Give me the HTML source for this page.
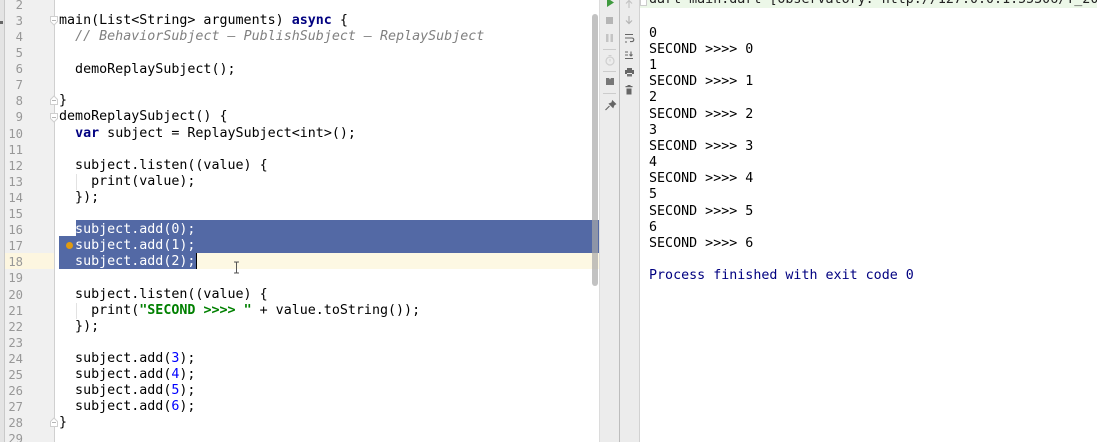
<!DOCTYPE html>
<html><head><meta charset="utf-8">
<style>
html,body{margin:0;padding:0;background:#fff;}
#r{position:relative;width:1097px;height:442px;overflow:hidden;background:#fff;font-family:"DejaVu Sans Mono","Liberation Mono",monospace;font-size:13.33px;color:#000;filter:blur(0.35px);}
.a{position:absolute;}
.l{position:absolute;white-space:pre;line-height:16px;height:16px;}
.n{position:absolute;left:-9px;width:32px;text-align:right;color:#989898;line-height:16px;height:16px;font-size:12.2px;}
b.k{color:#000080;font-weight:bold;}
i{color:#808080;font-style:italic;}
.s{color:#008000;font-weight:bold;}
.d{color:#0000ff;}
.w{color:#fff;}
</style></head><body>
<div id="r">
<div class="a" style="left:0;top:0;width:5px;height:442px;background:#e4e4e4;border-right:1px solid #c9c9c9;box-sizing:border-box;"></div>
<div class="a" style="left:5px;top:0;width:50px;height:442px;background:#f0f0f0;border-right:1px solid #d0d0d0;box-sizing:border-box;"></div>
<div class="a" style="left:0;top:21px;width:3px;height:3px;background:#666;"></div>
<div class="a" style="left:5px;top:253px;width:49px;height:16px;background:#fdf6e0;"></div>
<div class="a" style="left:76px;top:220px;width:524px;height:17px;background:#5369a5;"></div>
<div class="a" style="left:59px;top:236px;width:541px;height:33px;background:#5369a5;"></div>
<div class="a" style="left:196px;top:253px;width:1px;height:16px;background:#000;"></div>
<div class="a" style="left:197px;top:253px;width:402px;height:16px;background:#fdf8e3;"></div>
<div class="a" style="left:66px;top:242px;width:7px;height:7px;border-radius:50%;background:#e09a10;"></div>

<div class="n" style="top:-3px">2</div><div class="n" style="top:13px">3</div><div class="n" style="top:29px">4</div><div class="n" style="top:45px">5</div><div class="n" style="top:61px">6</div><div class="n" style="top:77px">7</div><div class="n" style="top:93px">8</div><div class="n" style="top:109px">9</div><div class="n" style="top:126px">10</div><div class="n" style="top:142px">11</div><div class="n" style="top:158px">12</div><div class="n" style="top:174px">13</div><div class="n" style="top:190px">14</div><div class="n" style="top:206px">15</div><div class="n" style="top:222px">16</div><div class="n" style="top:238px">17</div><div class="n" style="top:254px">18</div><div class="n" style="top:270px">19</div><div class="n" style="top:287px">20</div><div class="n" style="top:303px">21</div><div class="n" style="top:319px">22</div><div class="n" style="top:335px">23</div><div class="n" style="top:351px">24</div><div class="n" style="top:367px">25</div><div class="n" style="top:383px">26</div><div class="n" style="top:399px">27</div><div class="n" style="top:415px">28</div><div class="n" style="top:431px">29</div>

<svg class="a" style="left:0;top:0" width="60" height="442" viewBox="0 0 60 442">
<g fill="#fff" stroke="#cfcfcf" stroke-width="1">
<path d="M50.500 16.500h7v5l-3.500 3.500l-3.500-3.500Z"/>
<path d="M50.500 104.500h7v-5l-3.500-3.500l-3.500 3.500Z"/>
<path d="M50.500 113.500h7v5l-3.500 3.500l-3.500-3.500Z"/>
<path d="M50.500 426.500h7v-5l-3.500-3.500l-3.500 3.500Z"/>
</g>
<path d="M52 20.500h4M52 100.500h4M52 117.500h4M52 422.500h4" stroke="#b5b5b5" fill="none"/>
</svg>

<div class="a" style="left:76px;top:174px;width:1px;height:16px;background:#e2e2e2;"></div>
<div class="a" style="left:76px;top:303px;width:1px;height:16px;background:#e2e2e2;"></div>

<div class="l" style="left:59px;top:13px">main(List&lt;String&gt; arguments) <b class="k">async</b> {</div>
<div class="l" style="left:59px;top:29px">  <i>// BehaviorSubject – PublishSubject – ReplaySubject</i></div>
<div class="l" style="left:59px;top:62px">  demoReplaySubject();</div>
<div class="l" style="left:59px;top:93px">}</div>
<div class="l" style="left:59px;top:109px">demoReplaySubject() {</div>
<div class="l" style="left:59px;top:126px">  <b class="k">var</b> subject = ReplaySubject&lt;int&gt;();</div>
<div class="l" style="left:59px;top:158px">  subject.listen((value) {</div>
<div class="l" style="left:59px;top:174px">    print(value);</div>
<div class="l" style="left:59px;top:190px">  });</div>
<div class="l w" style="left:59px;top:222px">  subject.add(0);</div>
<div class="l w" style="left:59px;top:238px">  subject.add(1);</div>
<div class="l w" style="left:59px;top:254px">  subject.add(2);</div>
<div class="l" style="left:59px;top:287px">  subject.listen((value) {</div>
<div class="l" style="left:59px;top:303px">    print(<span class="s">"SECOND &gt;&gt;&gt;&gt; "</span> + value.toString());</div>
<div class="l" style="left:59px;top:319px">  });</div>
<div class="l" style="left:59px;top:351px">  subject.add(<span class="d">3</span>);</div>
<div class="l" style="left:59px;top:367px">  subject.add(<span class="d">4</span>);</div>
<div class="l" style="left:59px;top:383px">  subject.add(<span class="d">5</span>);</div>
<div class="l" style="left:59px;top:399px">  subject.add(<span class="d">6</span>);</div>
<div class="l" style="left:59px;top:415px">}</div>

<svg class="a" style="left:232px;top:261px" width="9" height="13" viewBox="0 0 9 13"><path d="M2 1h2l.5 1 .5-1h2M4.500 2v9M2 12h2l.5-1 .5 1h2" fill="none" stroke="#555" stroke-width="1"/></svg>

<div class="a" style="left:600px;top:0;width:39px;height:442px;background:#ececec;"></div>
<div class="a" style="left:592px;top:14px;width:6px;height:272px;background:#a8a8a8;opacity:.7;border-radius:3px;"></div>
<div class="a" style="left:599px;top:0;width:1px;height:442px;background:#dcdcdc;"></div>
<div class="a" style="left:619px;top:0;width:1px;height:442px;background:#bdbdbd;"></div>
<div class="a" style="left:639px;top:0;width:1px;height:442px;background:#d2d2d2;"></div>
<div class="a" style="left:603px;top:49px;width:13px;height:1px;background:#ccc;"></div>
<div class="a" style="left:603px;top:71px;width:13px;height:1px;background:#ccc;"></div>
<div class="a" style="left:603px;top:93px;width:13px;height:1px;background:#ccc;"></div>

<svg class="a" style="left:590px;top:0" width="48" height="115" viewBox="0 0 48 115">
<path d="M17 -2V7L24 2.500Z" fill="#3f9a3f"/>
<rect x="16" y="17" width="7" height="7" fill="#b5b5b5"/>
<rect x="16" y="34" width="2.500" height="8" fill="#c4c4c4"/><rect x="20.500" y="34" width="2.500" height="8" fill="#c4c4c4"/>
<circle cx="20" cy="61" r="4" fill="none" stroke="#cfcfcf" stroke-width="1.200"/><path d="M20 59v2.500M18.500 55.500h3" stroke="#cfcfcf" fill="none"/>
<path d="M16 78h3l1 1.500 1-1.500h3v7h-8Z" fill="#777"/>
<path d="M22.500 101l3 3-1.500 .8-1 2.500-3.500-3.500 2.500-1ZM19.500 106l-4 4" fill="#666" stroke="#666" stroke-width="1.200"/>
<path d="M39 8V1M36 3.500l3-3 3 3" stroke="#c4c4c4" stroke-width="1.200" fill="none"/>
<path d="M39 16v7M36 20.500l3 3 3-3" stroke="#b5b5b5" stroke-width="1.200" fill="none"/>
<path d="M35 34.500h8M35 38h7a1.800 1.800 0 0 1 0 3.600h-2M35 42h2" stroke="#666" stroke-width="1.100" fill="none"/>
<path d="M35 52h3M35 55h3M35 58.500h8M41 51.500v4.500M39.500 54.500l1.500 1.500 1.500-1.500" stroke="#666" stroke-width="1.100" fill="none"/>
<path d="M37 68h5v2h2v4h-2v-1h-5v1h-2v-4h2Z" fill="#666"/><rect x="37" y="74" width="5" height="2.500" fill="#777"/>
<path d="M35.500 86h7v1.200h-7ZM37.500 85h3v1h-3ZM36.500 88.500h5v6h-5Z" fill="#666"/>
</svg>

<div class="a" style="left:640px;top:0;width:457px;height:8px;background:#ecf7e8;"></div>
<div class="a" style="left:640px;top:0;width:7px;height:6px;border:1px solid #ccc;border-top:0;box-sizing:border-box;background:#fff;"></div>
<div class="l" style="left:649px;top:-8px;color:#222;">dart main.dart [Observatory: http://127.0.0.1:55306/T_20</div>

<div class="l" style="left:649px;top:26px">0</div>
<div class="l" style="left:649px;top:42px">SECOND &gt;&gt;&gt;&gt; 0</div>
<div class="l" style="left:649px;top:58px">1</div>
<div class="l" style="left:649px;top:74px">SECOND &gt;&gt;&gt;&gt; 1</div>
<div class="l" style="left:649px;top:90px">2</div>
<div class="l" style="left:649px;top:107px">SECOND &gt;&gt;&gt;&gt; 2</div>
<div class="l" style="left:649px;top:123px">3</div>
<div class="l" style="left:649px;top:139px">SECOND &gt;&gt;&gt;&gt; 3</div>
<div class="l" style="left:649px;top:155px">4</div>
<div class="l" style="left:649px;top:171px">SECOND &gt;&gt;&gt;&gt; 4</div>
<div class="l" style="left:649px;top:187px">5</div>
<div class="l" style="left:649px;top:204px">SECOND &gt;&gt;&gt;&gt; 5</div>
<div class="l" style="left:649px;top:220px">6</div>
<div class="l" style="left:649px;top:236px">SECOND &gt;&gt;&gt;&gt; 6</div>
<div class="l" style="left:649px;top:268px;color:#000080;">Process finished with exit code 0</div>
</div>
</body></html>
